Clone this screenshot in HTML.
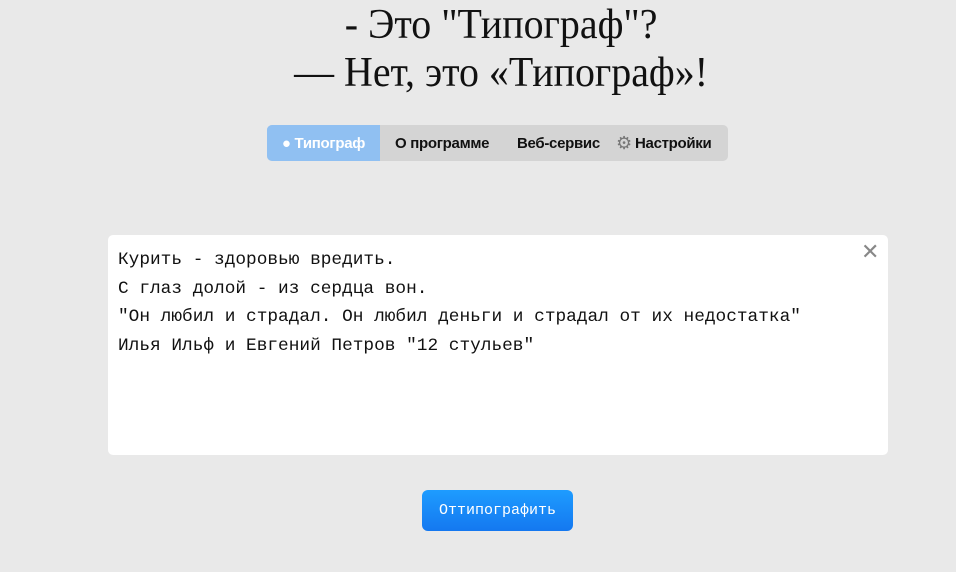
<!DOCTYPE html>
<html><head><meta charset="utf-8"><style>
body{margin:0;background:#e9e9e9;width:956px;height:572px;overflow:hidden;position:relative}
h1{position:absolute;left:42px;width:914px;margin:0;text-align:center;font:400 42px/48px "Liberation Serif",serif;color:#111;top:1px;transform:scaleX(0.95);transform-origin:499px 0}
.nav{position:absolute;left:267px;top:125px;width:461px;height:36px;background:#d4d4d4;border-radius:5px;overflow:hidden;font:600 15px/38px "Liberation Sans","DejaVu Sans",sans-serif;color:#111;letter-spacing:-0.3px}
.nav span{position:absolute;top:0;white-space:nowrap}
.act{left:0;width:113px;height:36px;background:#90c0f2;color:#fff;text-align:center}
.g{position:absolute;left:349px;top:0;color:#777;font-size:18px;line-height:36px}
.box{position:absolute;left:108px;top:235px;width:780px;height:220px;background:#fff;border-radius:5px}
.txt{position:absolute;left:118px;top:246px;font:17.8px/28.7px "Liberation Mono",monospace;color:#111;white-space:pre}
.x{position:absolute;left:861px;top:240px;font:bold 22px "DejaVu Sans",sans-serif;color:#888}
.btn{position:absolute;left:422px;top:490px;width:151px;height:41px;border-radius:6px;background:linear-gradient(#1e9cff,#1478f0);color:#fff;text-align:center;font:15px/41px "Liberation Mono",monospace}
</style></head><body>
<h1>- Это "Типограф"?<br>— Нет, это «Типограф»!</h1>
<div class="nav">
<span class="act">● Типограф</span>
<span style="left:128px">О программе</span>
<span style="left:250px">Веб-сервис</span>
<div class="g">⚙</div>
<span style="left:368px">Настройки</span>
</div>
<div class="box"></div>
<div class="x">✕</div>
<div class="txt">Курить - здоровью вредить.
С глаз долой - из сердца вон.
"Он любил и страдал. Он любил деньги и страдал от их недостатка"
Илья Ильф и Евгений Петров "12 стульев"</div>
<div class="btn">Оттипографить</div>
</body></html>
